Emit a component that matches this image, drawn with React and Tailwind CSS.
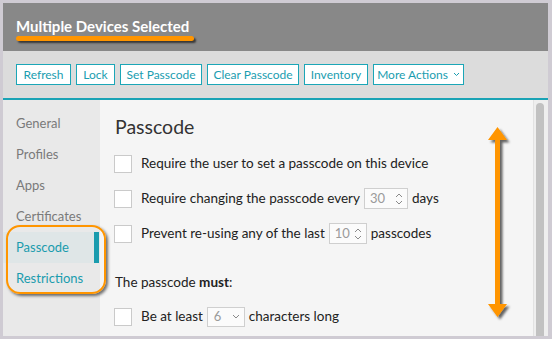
import React from "react";

const Chev = ({ className }) => (
  <svg className={className} width="8" height="5" viewBox="0 0 8 5" fill="none">
    <path d="M1 1 L4 4 L7 1" stroke="#8a8a8a" strokeWidth="1" />
  </svg>
);

const UpDown = () => (
  <svg width="8" height="14" viewBox="0 0 8 14" fill="none">
    <path d="M1 5 L4 2 L7 5" stroke="#8a8a8a" strokeWidth="1" />
    <path d="M1 9 L4 12 L7 9" stroke="#8a8a8a" strokeWidth="1" />
  </svg>
);

const Box = () => (
  <div className="w-[18px] h-[18px] bg-white border border-[#cacaca] mr-[9px] shrink-0" />
);

const Spin = ({ value, w }) => (
  <div className={`${w} h-[21px] border border-[#cfcfcf] bg-[#fbfbfb] flex items-center justify-between pl-[5px] pr-[4px] mx-[4px]`}>
    <span className="text-[13px] text-[#9a9a9a]">{value}</span>
    <UpDown />
  </div>
);

export default function App() {
  const btns = [
    ["Refresh", "w-[55px]"],
    ["Lock", "w-[39px]"],
    ["Set Passcode", "w-[82px]"],
    ["Clear Passcode", "w-[92px]"],
    ["Inventory", "w-[64px]"],
  ];
  const side = ["General", "Profiles", "Apps", "Certificates"];
  return (
    <div className="relative w-[552px] h-[339px] overflow-hidden bg-[#cfcbd3] pt-[3px] pl-[3px] pr-[4px] pb-[3px] font-['Lato','Open_Sans',sans-serif]">
      <div className="flex flex-col h-full">
        <div className="relative h-[48px] bg-[#888888] px-[13px] pt-[13px] shrink-0">
          <div className="text-white font-bold text-[15px] leading-[20px]">Multiple Devices Selected</div>
          <div className="absolute left-[13px] top-[33px] w-[178px] h-[5px] rounded-full bg-[#ff9500] shadow-[2px_2px_2px_rgba(0,0,0,0.6)]" />
        </div>
        <div className="h-[47px] bg-[#dcdcdc] px-[13px] pt-[13px] flex gap-[5px] shrink-0">
          {btns.map(([t, w]) => (
            <div key={t} className={`${w} h-[21px] bg-white border border-[#1ba6b7] text-[#1a9db0] text-[12px] flex items-center justify-center`}>{t}</div>
          ))}
          <div className="w-[91px] h-[21px] bg-white border border-[#1ba6b7] text-[#1a9db0] text-[12px] flex items-center justify-center gap-[5px]">
            More Actions
            <svg width="7" height="5" viewBox="0 0 7 5" fill="none"><path d="M1 1 L3.5 3.5 L6 1" stroke="#1a9db0" strokeWidth="1" /></svg>
          </div>
        </div>
        <div className="h-[2px] bg-[#1aa3b5] shrink-0" />
        <div className="flex flex-1 min-h-0">
          <div className="w-[97px] bg-[#e9e9e9] pt-[8px] shrink-0">
            {side.map((s) => (
              <div key={s} className="h-[31px] pl-[13px] flex items-center text-[13px] text-[#7a7a7a]">{s}</div>
            ))}
            <div className="h-[31px] flex items-stretch">
              <div className="flex-1 bg-[#dfe6e7] pl-[13px] flex items-center text-[13px] text-[#1a9cae]">Passcode</div>
              <div className="w-[5px] bg-[#1a9cae] mr-[1px]" />
            </div>
            <div className="h-[31px] pl-[13px] flex items-center text-[13px] text-[#1a9cae]">Restrictions</div>
          </div>
          <div className="relative flex-1 bg-[#f5f5f5] pl-[14px] pt-[15px] text-[13.5px] text-[#222]">
            <div className="text-[19.5px] leading-[24px] font-normal text-[#333] pl-[1px]">Passcode</div>
            <div className="mt-[7px]">
              <div className="h-[35px] flex items-center"><Box />Require the user to set a passcode on this device</div>
              <div className="h-[35px] flex items-center"><Box />Require changing the passcode every<Spin value="30" w="w-[44px]" />days</div>
              <div className="h-[35px] flex items-center"><Box />Prevent re-using any of the last<Spin value="10" w="w-[38px]" />passcodes</div>
            </div>
            <div className="mt-[21px] leading-[20px] pl-[1px]">The passcode <b className="font-bold">must</b>:</div>
            <div className="mt-[7px] h-[35px] flex items-center">
              <Box />Be at least
              <div className="w-[38px] h-[20px] border border-[#cfcfcf] bg-[#fbfbfb] flex items-center justify-between pl-[6px] pr-[4px] mx-[4px]">
                <span className="text-[13px] text-[#9a9a9a]">6</span>
                <Chev />
              </div>
              characters long
            </div>
            <svg className="absolute left-[386px] top-[27px]" width="26" height="196" viewBox="0 0 26 196" fill="none">
              <defs>
                <filter id="sh" x="-50%" y="-10%" width="200%" height="120%">
                  <feDropShadow dx="2.5" dy="2.5" stdDeviation="1.2" floodColor="#000" floodOpacity="0.6" />
                </filter>
              </defs>
              <g filter="url(#sh)">
                <path d="M11.5 0 L21 13 L14 13 L14 177 L21 177 L11.5 190 L2 177 L9 177 L9 13 L2 13 Z" fill="#ff9500" />
              </g>
            </svg>
          </div>
          <div className="w-[15px] bg-[#eeeeee] border-l border-[#e2e2e2] pl-[2px] pt-[3px] shrink-0">
            <div className="w-[8px] h-full bg-[#c1c1c1] rounded-t-full" />
          </div>
        </div>
      </div>
      <div className="absolute left-[6px] top-[225px] w-[100px] h-[69px] rounded-[14px] border-[2.5px] border-[#ff9500] shadow-[2px_2px_3px_rgba(0,0,0,0.55)]" />
    </div>
  );
}
